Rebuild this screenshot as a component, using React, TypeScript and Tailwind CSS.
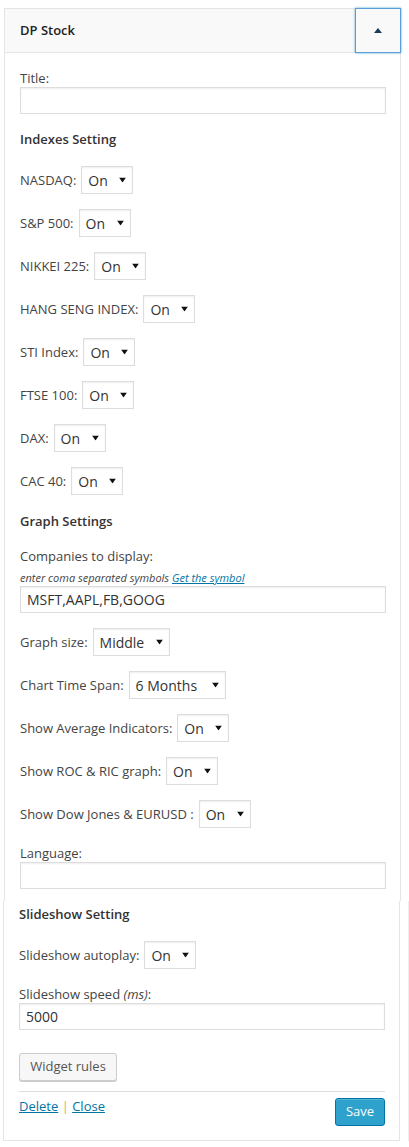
import React from 'react';

const Arrow = () => (
  <svg width="7" height="5" viewBox="0 0 7 5" className="pointer-events-none absolute right-[7px] top-1/2 -translate-y-1/2">
    <path d="M0 0h7L3.5 5z" fill="#111" />
  </svg>
);

const Select = ({ value, width }: { value: string; width: string }) => (
  <div className={`relative h-[28px] ${width}`}>
    <select
      defaultValue={value}
      className="h-full w-full appearance-none border border-[#ddd] bg-white pl-[6px] text-[14px] text-[#333] shadow-[inset_0_1px_2px_rgba(0,0,0,0.07)] outline-none"
    >
      <option>{value}</option>
    </select>
    <Arrow />
  </div>
);

const Row = ({ label, value = 'On', width = 'w-[52px]', className = 'mt-[15px]' }: any) => (
  <div className={`flex h-[28px] items-center gap-[5px] ${className}`}>
    <label className="leading-[18px]">{label}</label>
    <Select value={value} width={width} />
  </div>
);

const TextInput = ({ value = '' }: { value?: string }) => (
  <input
    defaultValue={value}
    className="block h-[27px] w-full border border-[#ddd] bg-white px-[6px] text-[14px] text-[#333] shadow-[inset_0_1px_2px_rgba(0,0,0,0.07)] outline-none"
  />
);

const Heading = ({ children, className = '' }: any) => (
  <h4 className={`font-semibold leading-[18px] text-[#333] ${className}`}>{children}</h4>
);

const indexes = ['S&P 500:', 'NIKKEI 225:', 'HANG SENG INDEX:', 'STI Index:', 'FTSE 100:', 'DAX:', 'CAC 40:'];

export default function App() {
  return (
    <div className="min-h-screen bg-white pt-[8px] font-['Open_Sans',sans-serif] text-[13px] text-[#444]">
      {/* upper part of the widget */}
      <div className="ml-[4px] w-[397px] border-x border-t border-[#e5e5e5]">
        <div className="flex h-[44px] items-center justify-between border-b border-[#e5e5e5] bg-[#f9f9f9]">
          <span className="pl-[15px] font-semibold text-[#222]">DP Stock</span>
          <button className="-mr-px -my-px flex w-[46px] self-stretch items-center justify-center border border-[#5b9dd9] bg-[#f9f9f9] shadow-[0_0_2px_rgba(30,140,190,0.8)]">
            <svg width="8" height="5" viewBox="0 0 8 5">
              <path d="M0 5L4 0l4 5z" fill="#1d3a57" />
            </svg>
          </button>
        </div>

        <div className="pb-[12px] pl-[15px] pr-[14px]">
          <label className="mt-[16px] block leading-[18px]">Title:</label>
          <TextInput />

          <Heading className="mt-[16px]">Indexes Setting</Heading>
          <Row label="NASDAQ:" className="mt-[18px]" />
          {indexes.map((l) => (
            <Row key={l} label={l} />
          ))}

          <Heading className="mt-[17px]">Graph Settings</Heading>
          <label className="mt-[17px] block leading-[18px]">Companies to display:</label>
          <p className="mt-[4px] text-[11px] italic leading-[17px]">
            enter coma separated symbols{' '}
            <a href="#" className="text-[#0074a2] underline">Get the symbol</a>
          </p>
          <TextInput value="MSFT,AAPL,FB,GOOG" />

          <Row label="Graph size:" value="Middle" width="w-[77px]" />
          <Row label="Chart Time Span:" value="6 Months" width="w-[97px]" />
          <Row label="Show Average Indicators:" />
          <Row label="Show ROC & RIC graph:" />
          <Row label="Show Dow Jones & EURUSD :" />

          <label className="mt-[16px] block leading-[18px]">Language:</label>
          <TextInput />
        </div>
      </div>

      {/* lower part of the widget */}
      <div className="w-[409px] border-r border-[#eee]">
        <div className="ml-[3px] w-[397px] border-x border-b border-[#e5e5e5] pb-[14px] pl-[15px] pr-[14px] pt-[4px]">
          <Heading>Slideshow Setting</Heading>
          <Row label="Slideshow autoplay:" className="mt-[18px]" />

          <label className="mt-[16px] block leading-[18px]">
            Slideshow speed <i>(ms)</i>:
          </label>
          <TextInput value="5000" />

          <button className="mt-[23px] h-[28px] w-[98px] rounded-[3px] border border-[#ccc] bg-[#f7f7f7] text-[13px] text-[#555] shadow-[0_1px_0_#ccc]">
            Widget rules
          </button>

          <div className="mt-[10px] border-t border-[#ddd] pt-[6px]">
            <div className="flex items-start justify-between">
              <div className="leading-[16px]">
                <a href="#" className="text-[#0074a2] underline">Delete</a>
                <span className="text-[#d8a85a]"> | </span>
                <a href="#" className="text-[#0074a2] underline">Close</a>
              </div>
              <button className="h-[28px] w-[50px] rounded-[3px] border border-[#0074a2] bg-[#2ea2cc] text-[13px] text-white shadow-[inset_0_1px_0_rgba(120,200,230,0.5)]">
                Save
              </button>
            </div>
          </div>
        </div>
      </div>
    </div>
  );
}
